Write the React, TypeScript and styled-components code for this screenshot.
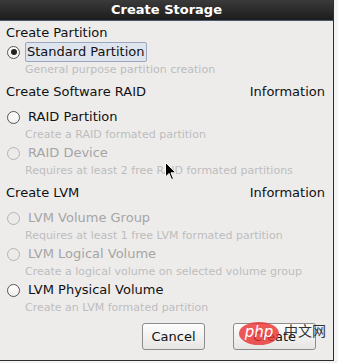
import React, { FC } from 'react'
import styled, { createGlobalStyle } from 'styled-components'

const GlobalStyle = createGlobalStyle`
body {
  margin: 0;
  background: #f3f3f3;
  font-family: "DejaVu Sans", "Noto Sans", sans-serif;
}
`

const Window = styled.div`
position: relative;
width: 333px;
height: 360px;
background: #edeceb;
border-right: 1px solid #2e2e2e;
border-bottom: 1px solid #2e2e2e;
display: flex;
flex-direction: column;
overflow: hidden;
`
const TitleBar = styled.div`
height: 20px;
background: linear-gradient(#3a3a3a, #1c1c1c);
border-bottom: 1px solid #4b5a70;
color: #fff;
font-weight: bold;
font-size: 13px;
line-height: 20px;
text-align: center;
`
const Body = styled.div`
display: flex;
flex-direction: column;
padding: 1px 8px 0 6px;
`
const Heading = styled.div<{ $first?: boolean }>`
display: flex;
justify-content: space-between;
font-size: 13px;
line-height: ${p => (p.$first ? '21px' : '22px')};
padding: ${p => (p.$first ? '0' : '2px 0 5px')};
color: #111;
`
const Option = styled.label<{ $disabled?: boolean }>`
display: flex;
align-items: center;
height: 18px;
font-size: 13px;
color: ${p => (p.$disabled ? '#a5a5a5' : '#111')};
`
const Radio = styled.span<{ $checked?: boolean; $disabled?: boolean }>`
position: relative;
box-sizing: border-box;
width: 13px;
height: 13px;
margin: 0 6px 0 1px;
border-radius: 50%;
border: 1px solid ${p => (p.$disabled ? '#b4b4b4' : '#555')};
background: ${p => (p.$disabled ? '#ecebea' : 'linear-gradient(#fff, #f0f0f0)')};
&::after {
  content: '';
  display: ${p => (p.$checked ? 'block' : 'none')};
  position: absolute;
  left: 2.5px;
  top: 2.5px;
  width: 6px;
  height: 6px;
  border-radius: 50%;
  background: #222;
}
`
const Label = styled.span<{ $focused?: boolean }>`
padding: 0 2px 0 1px;
margin-left: ${p => (p.$focused ? '-1px' : '0')};
line-height: 18px;
border: 1px solid ${p => (p.$focused ? '#9aa8bf' : 'transparent')};
background: ${p => (p.$focused ? '#dfe5ee' : 'transparent')};
border-radius: 2px;
`
const Desc = styled.div`
height: 18px;
line-height: 18px;
font-size: 11px;
color: #bdbdbd;
padding-left: 19px;
`
const Buttons = styled.div`
display: flex;
justify-content: flex-end;
gap: 28px;
padding: 6px 9px 0 0;
`
const Button = styled.button<{ $w: number }>`
width: ${p => p.$w}px;
height: 27px;
border: 1px solid #8c8c8c;
border-radius: 3px;
background: linear-gradient(#fdfdfd, #e6e5e4);
font-family: "DejaVu Sans", sans-serif;
font-size: 13px;
color: #111;
`
const Watermark = styled.div`
position: absolute;
left: 239px;
top: 322px;
display: flex;
align-items: center;
gap: 5px;
`
const PhpBadge = styled.span`
width: 40px;
height: 23px;
border-radius: 50%;
background: rgba(232, 48, 48, 0.8);
color: #fff;
font-family: "DejaVu Sans", sans-serif;
font-style: italic;
font-size: 15px;
line-height: 21px;
text-align: center;
`
const CnText = styled.span`
font-family: "Noto Sans CJK SC", sans-serif;
font-size: 14px;
color: #333;
margin-top: -8px;
`
const Cursor = styled.svg`
position: absolute;
left: 165px;
top: 162px;
`

const OptionRow: FC<{ label: string; desc: string; checked?: boolean; disabled?: boolean; focused?: boolean }> = ({ label, desc, checked, disabled, focused }) => (
  <>
    <Option $disabled={disabled}>
      <Radio $checked={checked} $disabled={disabled} />
      <Label $focused={focused}>{label}</Label>
    </Option>
    <Desc>{desc}</Desc>
  </>
)

export default function App() {
  return (
    <>
      <GlobalStyle />
      <Window>
        <TitleBar>Create Storage</TitleBar>
        <Body>
          <Heading $first>Create Partition</Heading>
          <OptionRow label='Standard Partition' desc='General purpose partition creation' checked focused />
          <Heading><span>Create Software RAID</span><span>Information</span></Heading>
          <OptionRow label='RAID Partition' desc='Create a RAID formated partition' />
          <OptionRow label='RAID Device' desc='Requires at least 2 free RAID formated partitions' disabled />
          <Heading><span>Create LVM</span><span>Information</span></Heading>
          <OptionRow label='LVM Volume Group' desc='Requires at least 1 free LVM formated partition' disabled />
          <OptionRow label='LVM Logical Volume' desc='Create a logical volume on selected volume group' disabled />
          <OptionRow label='LVM Physical Volume' desc='Create an LVM formated partition' />
          <Buttons>
            <Button $w={63}>Cancel</Button>
            <Button $w={83}>Create</Button>
          </Buttons>
        </Body>
        <Watermark>
          <PhpBadge>php</PhpBadge>
          <CnText>中文网</CnText>
        </Watermark>
        <Cursor width='12' height='19' viewBox='0 0 12 19'>
          <path d='M0.5 0.5 L0.5 15 L4 11.5 L6.5 17.5 L8.5 16.7 L6 10.8 L11 10.8 Z' fill='#000' stroke='#fff' strokeWidth='1' />
        </Cursor>
      </Window>
    </>
  )
}
